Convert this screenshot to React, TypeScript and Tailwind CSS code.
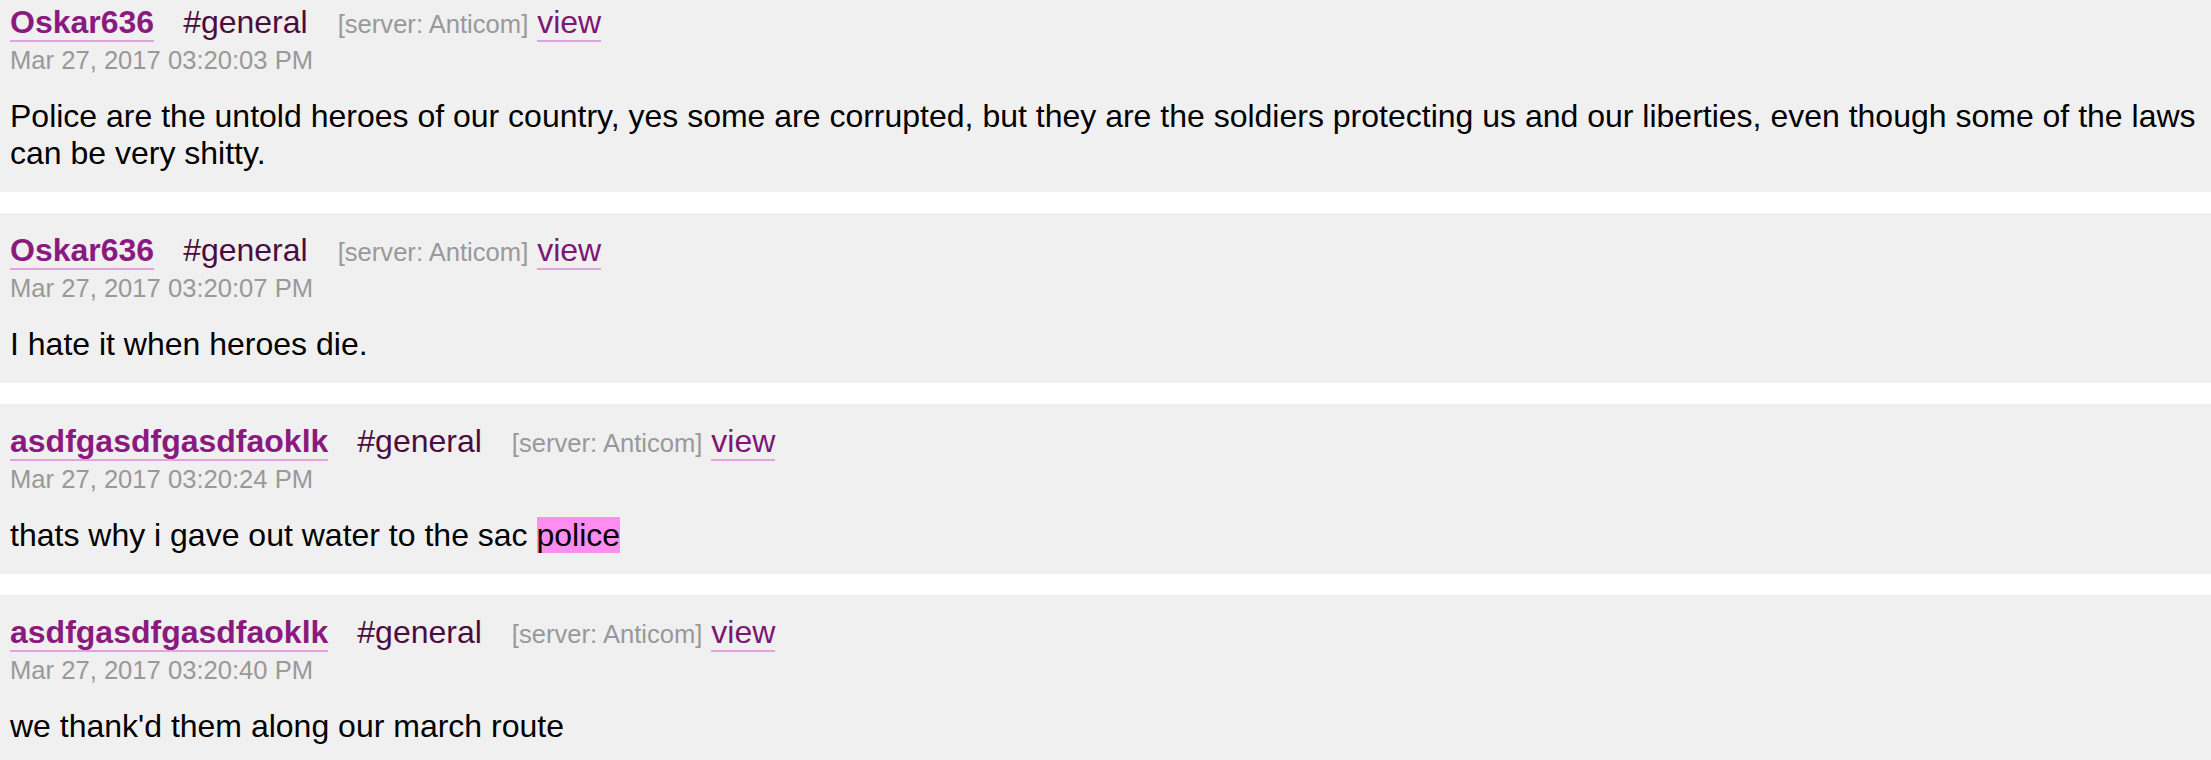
type Message = {
  user: string;
  time: string;
  body: React.ReactNode;
};

const messages: Message[] = [
  {
    user: 'Oskar636',
    time: 'Mar 27, 2017 03:20:03 PM',
    body: 'Police are the untold heroes of our country, yes some are corrupted, but they are the soldiers protecting us and our liberties, even though some of the laws can be very shitty.',
  },
  {
    user: 'Oskar636',
    time: 'Mar 27, 2017 03:20:07 PM',
    body: 'I hate it when heroes die.',
  },
  {
    user: 'asdfgasdfgasdfaoklk',
    time: 'Mar 27, 2017 03:20:24 PM',
    body: (
      <>
        thats why i gave out water to the sac <mark className="bg-[#ff8cf0] text-black">police</mark>
      </>
    ),
  },
  {
    user: 'asdfgasdfgasdfaoklk',
    time: 'Mar 27, 2017 03:20:40 PM',
    body: "we thank'd them along our march route",
  },
];

function MessageCard({ msg }: { msg: Message }) {
  return (
    <div className="mb-[21px] bg-[#f0f0f0] px-[10px] pt-[19px] pb-[20px]">
      <div className="whitespace-nowrap text-[32px] leading-[37px]">
        <a className="border-b-2 border-[#e3a3dc] font-bold text-[#8b1a80]">{msg.user}</a>
        <span className="ml-[29px] text-[#4b0d40]">#general</span>
        <span className="ml-[30px] text-[25.6px] text-[#999999]">[server: Anticom]</span>{' '}
        <a className="border-b-2 border-[#e3a3dc] text-[#7d1675]">view</a>
      </div>
      <div className="mt-[3px] text-[25.6px] leading-[29px] text-[#999999]">{msg.time}</div>
      <p className="mt-[23px] text-[32px] leading-[37px] text-black">{msg.body}</p>
    </div>
  );
}

export default function App() {
  return (
    <div className="h-[760px] overflow-hidden bg-white font-['Liberation_Sans',Arial,sans-serif]">
      <div className="-mt-[15px]">
        {messages.map((m, i) => (
          <MessageCard key={i} msg={m} />
        ))}
      </div>
    </div>
  );
}
